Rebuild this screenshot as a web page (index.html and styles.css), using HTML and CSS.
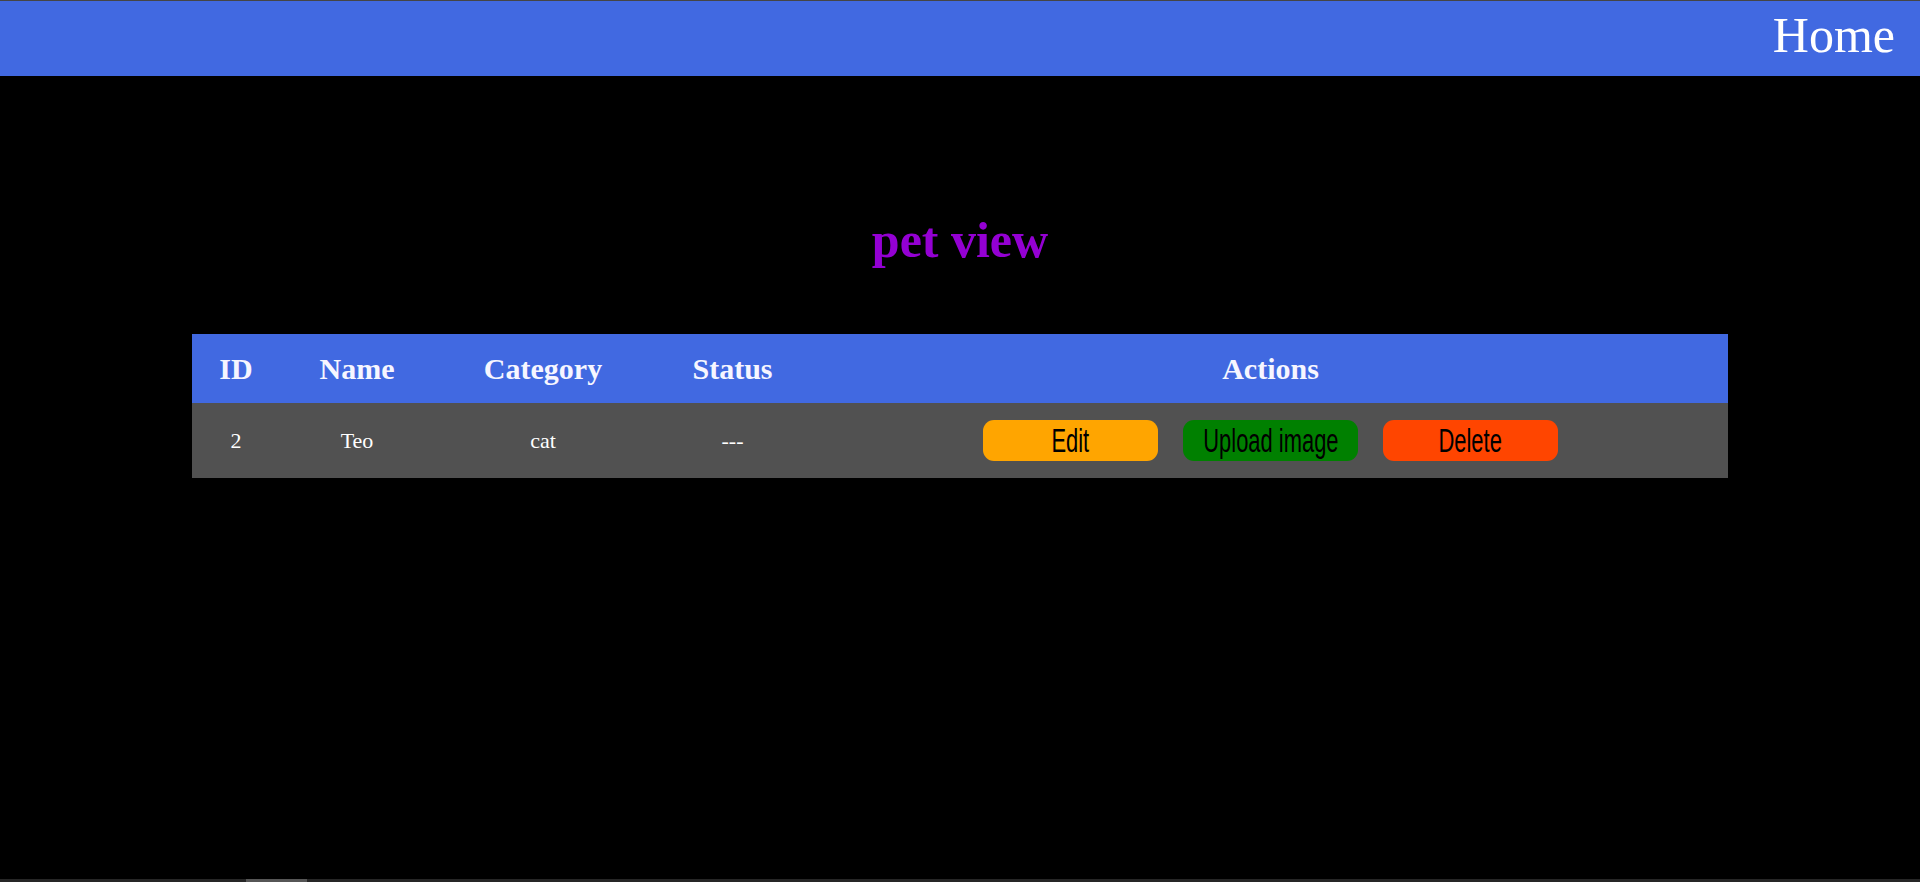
FILE: index.html
```html
<!DOCTYPE html>
<html lang="en">
<head>
<meta charset="utf-8">
<title>pet view</title>
<link rel="stylesheet" href="styles.css">
</head>
<body>
  <nav class="topbar">
    <a class="home-link" href="#">Home</a>
  </nav>
  <main class="content">
    <h1 class="page-title">pet view</h1>
    <table class="pet-table">
      <colgroup>
        <col class="col-id">
        <col class="col-name">
        <col class="col-category">
        <col class="col-status">
        <col class="col-actions">
      </colgroup>
      <thead>
        <tr>
          <th>ID</th>
          <th>Name</th>
          <th>Category</th>
          <th>Status</th>
          <th>Actions</th>
        </tr>
      </thead>
      <tbody>
        <tr>
          <td>2</td>
          <td>Teo</td>
          <td>cat</td>
          <td>---</td>
          <td>
            <div class="actions">
              <button class="btn btn-edit"><span class="btn-label">Edit</span></button>
              <button class="btn btn-upload"><span class="btn-label">Upload image</span></button>
              <button class="btn btn-delete"><span class="btn-label">Delete</span></button>
            </div>
          </td>
        </tr>
      </tbody>
    </table>
  </main>
  <div class="hscroll"><div class="hscroll-thumb"></div></div>
</body>
</html>
```

FILE: styles.css
```css
html, body {
  margin: 0;
  padding: 0;
  background: #000;
  height: 100%;
}

body {
  font-family: "Liberation Serif", "Times New Roman", serif;
  color: #fff;
  border-top: 1px solid #454545;
  box-sizing: border-box;
  overflow: hidden;
}

.topbar {
  height: 75px;
  background: #4169e1;
  display: flex;
  justify-content: flex-end;
  align-items: flex-start;
  padding: 6px 25px 0 0;
  box-sizing: border-box;
}

.home-link {
  font-size: 50px;
  line-height: 57px;
  color: #fff;
  text-decoration: none;
}

.content {
  padding-top: 134px;
}

.page-title {
  margin: 0;
  text-align: center;
  font-size: 50px;
  line-height: 60px;
  font-weight: bold;
  color: #9400d3;
}

.pet-table {
  margin: 64px auto 0;
  width: 80%;
  table-layout: fixed;
  border-collapse: collapse;
}

.col-id { width: 88px; }
.col-name { width: 154px; }
.col-category { width: 218px; }
.col-status { width: 161px; }

.pet-table th {
  background: #4169e1;
  height: 69px;
  padding: 0;
  font-size: 30px;
  font-weight: bold;
  text-align: center;
  vertical-align: middle;
  color: #f6f6ff;
}

.pet-table td {
  background: #515151;
  height: 75px;
  padding: 0;
  font-size: 22px;
  text-align: center;
  vertical-align: middle;
}

.actions {
  display: flex;
  justify-content: center;
  gap: 25px;
}

.btn {
  width: 175px;
  height: 41px;
  border: none;
  border-radius: 11px;
  padding: 0 0 2px;
  display: flex;
  align-items: center;
  justify-content: center;
  overflow: hidden;
  color: #000;
  font-family: "Liberation Sans", Arial, sans-serif;
  font-size: 34px;
}

.btn-label {
  display: inline-block;
  transform: scaleX(0.645);
  white-space: nowrap;
  line-height: 1;
}

.btn-edit { background: #ffa500; }
.btn-upload { background: #008000; }
.btn-delete { background: #ff4500; }

.hscroll {
  position: fixed;
  left: 0;
  right: 0;
  bottom: 0;
  height: 3px;
  background: #262626;
}

.hscroll-thumb {
  margin-left: 246px;
  width: 61px;
  height: 3px;
  background: #565656;
}
```
